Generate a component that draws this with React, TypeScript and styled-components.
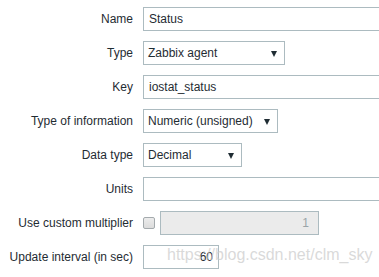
import React from "react";
import styled, { createGlobalStyle } from "styled-components";

const GlobalStyle = createGlobalStyle`
  html, body {
    margin: 0;
    padding: 0;
    background: #ffffff;
    overflow: hidden;
  }
  body {
    font-family: "Liberation Sans", Arial, sans-serif;
    font-size: 12px;
    color: #1f2c33;
  }
`;

const Page = styled.div`
  position: relative;
  width: 379px;
  height: 277px;
  overflow: hidden;
`;

const Form = styled.div`
  display: grid;
  grid-template-columns: 133px 1fr;
  grid-auto-rows: 24px;
  column-gap: 10px;
  row-gap: 10px;
  padding-top: 7px;
`;

const Label = styled.div`
  display: flex;
  align-items: center;
  justify-content: flex-end;
  white-space: nowrap;
  color: #1f2c33;
`;

const Field = styled.div`
  display: flex;
  align-items: center;
  gap: 5px;
`;

const TextBox = styled.div<{ $width?: number; $align?: "left" | "right"; $disabled?: boolean }>`
  box-sizing: border-box;
  height: 24px;
  width: ${(p) => (p.$width ? `${p.$width}px` : "240px")};
  flex: none;
  border: 1px solid #acbbc0;
  background: ${(p) => (p.$disabled ? "#ebebeb" : "#ffffff")};
  color: ${(p) => (p.$disabled ? "#9aa4a8" : "#1f2c33")};
  display: flex;
  align-items: center;
  justify-content: ${(p) => (p.$align === "right" ? "flex-end" : "flex-start")};
  padding: ${(p) => (p.$align === "right" ? (p.$disabled ? "0 9px 0 5px" : "0 5px") : "0 5px")};
  white-space: nowrap;
`;

const Select = styled.div<{ $width: number }>`
  box-sizing: border-box;
  height: 24px;
  width: ${(p) => p.$width}px;
  border: 1px solid #acbbc0;
  background: #ffffff;
  display: flex;
  align-items: center;
  justify-content: space-between;
  padding: 0 7px 0 4px;
  white-space: nowrap;
`;

const Arrow = styled.span`
  width: 0;
  height: 0;
  border-left: 3.5px solid transparent;
  border-right: 3.5px solid transparent;
  border-top: 6px solid #1f2c33;
  margin-top: 1px;
`;

const Checkbox = styled.span`
  box-sizing: border-box;
  width: 12px;
  height: 12px;
  border: 1px solid #a4aaad;
  border-radius: 2px;
  background: linear-gradient(#ececec, #dcdcdc);
  flex: none;
`;

const Watermark = styled.div`
  position: absolute;
  left: 167px;
  top: 246px;
  font-family: "Liberation Sans", Arial, sans-serif;
  font-size: 16px;
  color: rgba(205, 205, 205, 0.75);
  white-space: nowrap;
  pointer-events: none;
`;

export default function App() {
  return (
    <Page>
      <GlobalStyle />
      <Form>
        <Label>Name</Label>
        <Field>
          <TextBox $width={240}>Status</TextBox>
        </Field>

        <Label>Type</Label>
        <Field>
          <Select $width={142}>
            Zabbix agent
            <Arrow />
          </Select>
        </Field>

        <Label>Key</Label>
        <Field>
          <TextBox $width={240}>iostat_status</TextBox>
        </Field>

        <Label>Type of information</Label>
        <Field>
          <Select $width={135}>
            Numeric (unsigned)
            <Arrow />
          </Select>
        </Field>

        <Label>Data type</Label>
        <Field>
          <Select $width={99}>
            Decimal
            <Arrow />
          </Select>
        </Field>

        <Label>Units</Label>
        <Field>
          <TextBox $width={240} />
        </Field>

        <Label>Use custom multiplier</Label>
        <Field>
          <Checkbox />
          <TextBox $width={159} $align="right" $disabled>
            1
          </TextBox>
        </Field>

        <Label>Update interval (in sec)</Label>
        <Field>
          <TextBox $width={76} $align="right">
            60
          </TextBox>
        </Field>
      </Form>
      <Watermark>https://blog.csdn.net/clm_sky</Watermark>
    </Page>
  );
}
